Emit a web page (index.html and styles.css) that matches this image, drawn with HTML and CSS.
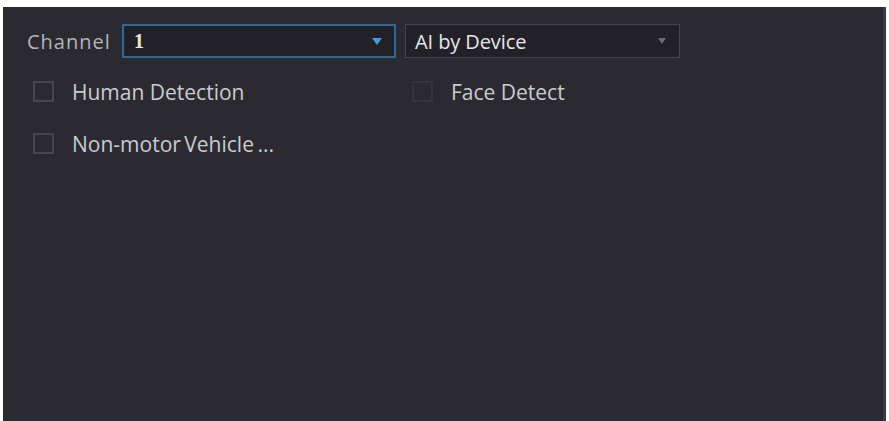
FILE: index.html
```html
<!DOCTYPE html>
<html>
<head>
<meta charset="utf-8">
<link rel="stylesheet" href="styles.css">
</head>
<body>
<div class="panel">
  <div class="toolbar">
    <span class="label">Channel</span>
    <div class="select select-active">
      <span class="value value-num">1</span>
      <svg class="caret" width="10" height="7" viewBox="0 0 10 7"><path d="M0 0 H10 L5 7 Z" fill="#3f9be0"/></svg>
    </div>
    <div class="select select-plain">
      <span class="value">AI by Device</span>
      <svg class="caret" width="8" height="6" viewBox="0 0 8 6"><path d="M0 0 H8 L4 6 Z" fill="#6a6a72"/></svg>
    </div>
  </div>
  <div class="options">
    <label class="opt"><span class="box"></span><span class="text">Human Detection</span></label>
    <label class="opt"><span class="box box-dim"></span><span class="text">Face Detect</span></label>
    <label class="opt"><span class="box"></span><span class="text text-tight">Non-motor Vehicle ...</span></label>
  </div>
</div>
</body>
</html>
```
FILE: styles.css
```css
html, body {
  margin: 0;
  padding: 0;
  background: #ffffff;
}
body {
  font-family: "Open Sans", "Noto Sans", sans-serif;
  width: 889px;
  height: 421px;
  overflow: hidden;
}
.panel {
  margin: 7px 0 0 3px;
  width: 883px;
  height: 414px;
  background: #2b2a31;
  box-sizing: border-box;
  padding: 17px 0 0 24px;
  border-right: 3px solid #3a3a40;
}
.toolbar {
  display: flex;
  align-items: center;
  height: 34px;
}
.label {
  color: #b4b4b8;
  font-size: 20px;
  letter-spacing: 1px;
  margin-right: 10px;
  width: 85px;
  white-space: nowrap;
}
.select {
  box-sizing: border-box;
  height: 34px;
  display: flex;
  align-items: center;
  justify-content: space-between;
  background: #222128;
  padding: 0 12px 0 10px;
}
.select-active {
  width: 274px;
  border: 2px solid #2d6a9c;
  margin-right: 9px;
}
.select-plain {
  width: 275px;
  border: 1px solid #46464c;
  padding-left: 9px;
  padding-right: 13px;
}
.value {
  color: #e6e6e8;
  font-size: 20px;
  letter-spacing: -0.1px;
}
.value-num {
  font-family: "Liberation Serif", serif;
  font-weight: bold;
  font-size: 20px;
}
.options {
  display: grid;
  grid-template-columns: 379px 300px;
  row-gap: 31px;
  margin-top: 23px;
  padding-left: 6px;
}
.opt {
  display: flex;
  align-items: center;
  height: 21px;
}
.box {
  box-sizing: border-box;
  width: 21px;
  height: 21px;
  border: 2px solid #46464c;
  margin-right: 18px;
  flex: none;
}
.box-dim {
  border-color: #34343a;
}
.text {
  color: #cbcbce;
  font-size: 21px;
  font-weight: 500;
  white-space: nowrap;
}
.text-tight {
  word-spacing: -2px;
}
```
